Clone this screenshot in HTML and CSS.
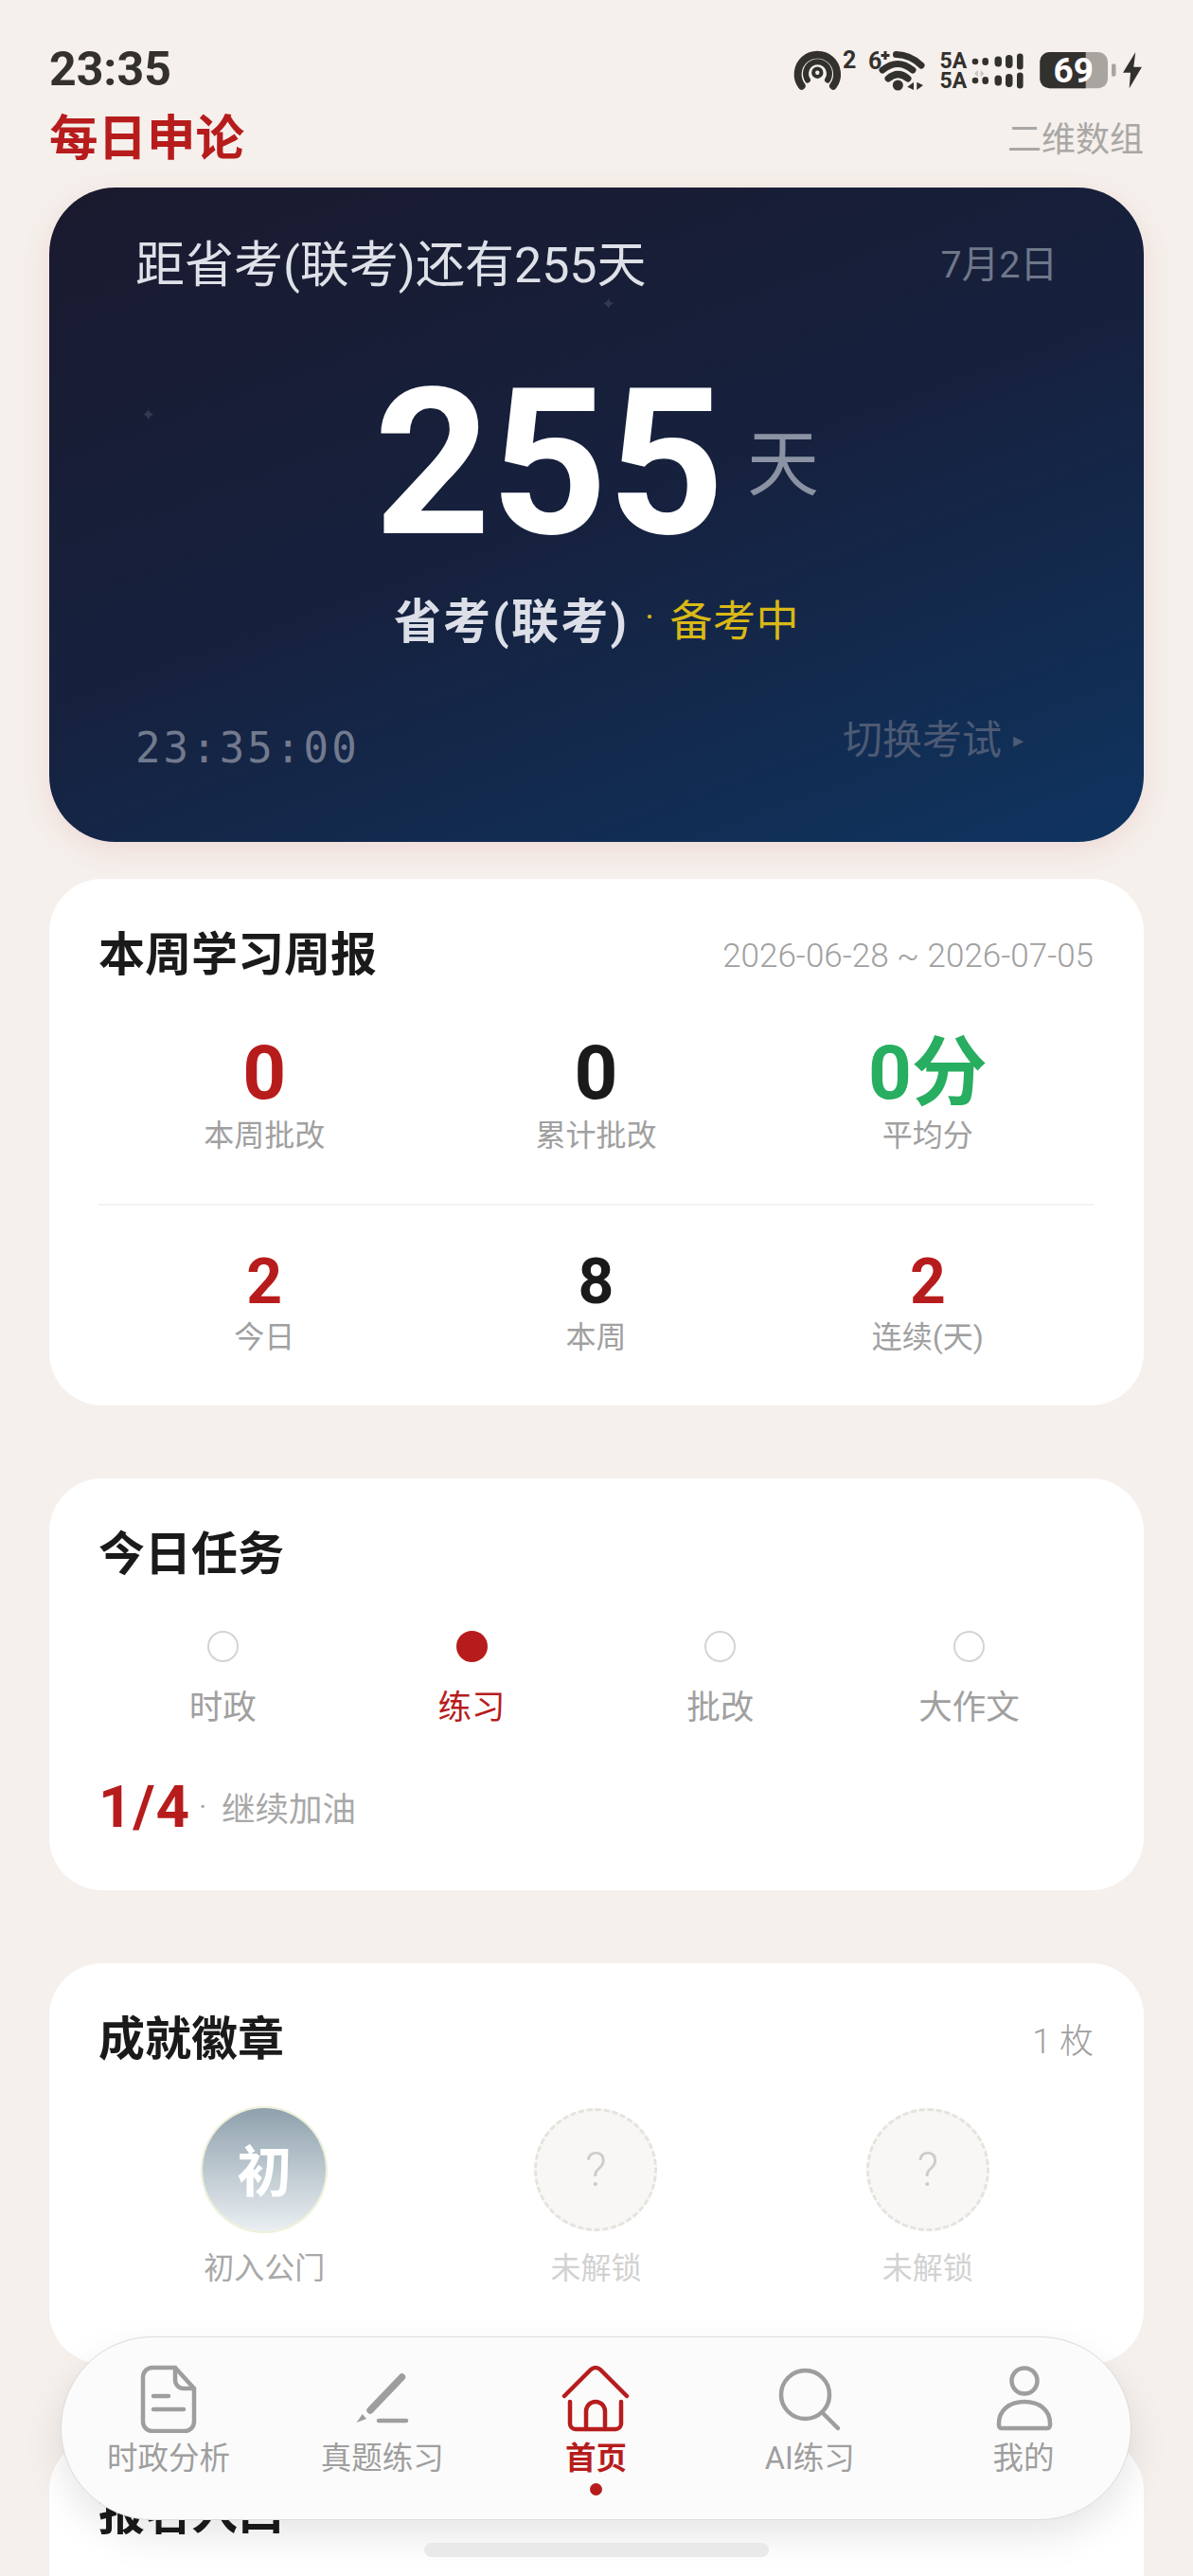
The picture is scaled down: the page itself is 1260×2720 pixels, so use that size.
FILE: index.html
```html
<!DOCTYPE html>
<html lang="zh-CN">
<head>
<meta charset="utf-8">
<title>每日申论</title>
<link rel="stylesheet" href="styles.css">
</head>
<body>
<div class="page">
  <div class="status">
    <span class="time">23:35</span>
    <svg class="status-icons" width="373" height="50" viewBox="0 0 373 50">
      <g class="si-stroke">
        <path class="s7" d="M11.700 40.700A20.700 20.700 0 1 1 45 40.700"/>
        <path class="s5" d="M18 34.500A12.500 12.500 0 1 1 39 34.500"/>
        <circle class="s3" cx="28.300" cy="26.700" r="4.200"/>
        <path class="s6" d="M111.500 7.500Q127 8 138 19"/>
        <path class="s6" d="M97 24Q113 11 129 24"/>
        <path class="s6" d="M103 33Q113.300 24 124 33"/>
      </g>
      <g class="si-fill">
        <text class="st-small" x="55" y="22">2</text>
        <text class="st-small" x="82" y="23">6</text>
        <path d="M98.500 4h3v3h3v3h-3v3h-3v-3h-3V7h3z"/>
        <circle cx="113.300" cy="40" r="5.500"/>
        <path d="M130 36.700V45l-6.700-3.300zM133.300 36.700V45l6.700-5z"/>
        <text class="st-5a" x="157.500" y="21.700">5A</text>
        <text class="st-5a" x="157.500" y="42.700">5A</text>
        <rect x="191.700" y="11.700" width="6.600" height="6.600" rx="3.300"/>
        <rect x="202.400" y="11" width="6.600" height="8" rx="3.300"/>
        <rect x="215.500" y="9.500" width="7.500" height="11" rx="3.700"/>
        <rect x="227" y="8" width="7.500" height="14" rx="3.700"/>
        <rect x="239" y="6.500" width="6.600" height="17" rx="3.300"/>
        <rect x="191.700" y="31.700" width="6.600" height="6.600" rx="3.300"/>
        <rect x="202.400" y="31" width="6.600" height="8" rx="3.300"/>
        <rect x="215.500" y="29.500" width="7.500" height="11" rx="3.700"/>
        <rect x="227" y="28" width="7.500" height="14" rx="3.700"/>
        <rect x="239" y="26.500" width="6.600" height="17" rx="3.300"/>
        <path d="M364.300 5L351 26.700h8L357.700 43.300 371 20.700h-8.700z"/>
      </g>
      <path class="si-faint" d="M198 24v7.500l-4-4zM200.500 24v7.500l4-3.700z"/>
      <rect class="si-batt" x="263.300" y="5" width="71.700" height="38.300" rx="10"/>
      <path class="si-dark" d="M273.300 5H311.700V43.300H273.300A10 10 0 0 1 263.300 33.300V15A10 10 0 0 1 273.300 5z"/>
      <rect class="si-batt" x="339" y="17.300" width="4.500" height="13.400" rx="2"/>
      <text class="st-batt" x="277.500" y="37">69</text>
    </svg>
  </div>

  <header class="topbar">
    <h1 class="brand">每日申论</h1>
    <span class="topbar-note">二维数组</span>
  </header>

  <section class="hero">
    <span class="star star-a">✦</span>
    <span class="star star-b">✦</span>
    <div class="hero-top">
      <span class="hero-title">距省考(联考)还有255天</span>
      <span class="hero-date">7月2日</span>
    </div>
    <div class="hero-count">
      <span class="hero-num">255</span>
      <span class="hero-unit">天</span>
    </div>
    <div class="hero-sub">
      <span class="hero-exam">省考(联考)</span>
      <span class="hero-dot">·</span>
      <span class="hero-state">备考中</span>
    </div>
    <div class="hero-foot">
      <span class="hero-clock">23:35:00</span>
      <span class="hero-switch">切换考试<span class="hero-arrow">▸</span></span>
    </div>
  </section>

  <section class="card card-report">
    <div class="card-head">
      <h2 class="card-title">本周学习周报</h2>
      <span class="card-meta">2026-06-28 ~ 2026-07-05</span>
    </div>
    <div class="stats stats-main">
      <div class="stat"><div class="stat-val red">0</div><div class="stat-label">本周批改</div></div>
      <div class="stat"><div class="stat-val">0</div><div class="stat-label">累计批改</div></div>
      <div class="stat"><div class="stat-val green">0分</div><div class="stat-label">平均分</div></div>
    </div>
    <div class="stats stats-sub">
      <div class="stat"><div class="stat-val red">2</div><div class="stat-label">今日</div></div>
      <div class="stat"><div class="stat-val">8</div><div class="stat-label">本周</div></div>
      <div class="stat"><div class="stat-val red">2</div><div class="stat-label">连续(天)</div></div>
    </div>
  </section>

  <section class="card card-task">
    <div class="card-head">
      <h2 class="card-title">今日任务</h2>
    </div>
    <div class="tasks">
      <div class="task"><span class="task-dot"></span><span class="task-label">时政</span></div>
      <div class="task task-done"><span class="task-dot"></span><span class="task-label">练习</span></div>
      <div class="task"><span class="task-dot"></span><span class="task-label">批改</span></div>
      <div class="task"><span class="task-dot"></span><span class="task-label">大作文</span></div>
    </div>
    <div class="progress">
      <span class="progress-num">1/4</span>
      <span class="progress-sep">·</span>
      <span class="progress-text">继续加油</span>
    </div>
  </section>

  <section class="card card-badges">
    <div class="card-head">
      <h2 class="card-title">成就徽章</h2>
      <span class="card-meta card-count">1 枚</span>
    </div>
    <div class="badges">
      <div class="badge"><div class="badge-disc badge-on">初</div><div class="badge-label">初入公门</div></div>
      <div class="badge badge-locked"><div class="badge-disc badge-off">?</div><div class="badge-label">未解锁</div></div>
      <div class="badge badge-locked"><div class="badge-disc badge-off">?</div><div class="badge-label">未解锁</div></div>
    </div>
  </section>

  <section class="card card-entry">
    <div class="card-head">
      <h2 class="card-title">报名入口</h2>
    </div>
  </section>
</div>

<nav class="tabbar">
  <a class="tab">
    <svg class="tab-icon" viewBox="0 0 72 72"><path d="M19 3H43L63 25V60A10 10 0 0 1 53 70H19A10 10 0 0 1 9 60V13A10 10 0 0 1 19 3Z"/><path d="M43 3V16A9 9 0 0 0 52 25H63"/><path d="M20 33H36M20 47H52"/></svg>
    <span class="tab-label">时政分析</span>
  </a>
  <a class="tab">
    <svg class="tab-icon" viewBox="0 0 72 72"><path class="pen-body" d="M56.500 13L23 48"/><path class="pen-tip" d="M14.700 52L8.600 61 19 57z"/><path d="M32 59H61"/></svg>
    <span class="tab-label">真题练习</span>
  </a>
  <a class="tab tab-active">
    <svg class="tab-icon" viewBox="0 0 72 72"><path d="M3 33L31 5Q36 1 41 5L69 33"/><path d="M9 39V62A6 6 0 0 0 15 68H57A6 6 0 0 0 63 62V39"/><path d="M26 68V49A10 10 0 0 1 46 49V68"/></svg>
    <span class="tab-label">首页</span>
    <span class="tab-dot"></span>
  </a>
  <a class="tab">
    <svg class="tab-icon" viewBox="0 0 72 72"><circle cx="31.500" cy="31.500" r="25.500"/><path d="M50 51L66 67"/></svg>
    <span class="tab-label">AI练习</span>
  </a>
  <a class="tab">
    <svg class="tab-icon" viewBox="0 0 72 72"><circle cx="37" cy="17" r="13.500"/><path d="M13 67A3 3 0 0 1 10 64V62C10 48 21 39 37 39S64 48 64 62V64A3 3 0 0 1 61 67Z"/></svg>
    <span class="tab-label">我的</span>
  </a>
</nav>
<div class="home-bar"></div>
</body>
</html>
```

FILE: styles.css
```css
* { box-sizing: border-box; }
html, body { margin: 0; padding: 0; }
body {
  width: 1260px;
  height: 2720px;
  overflow: hidden;
  position: relative;
  background: #f5f0ec;
  font-family: Roboto, "Noto Sans CJK SC", sans-serif;
  color: #1a1a1a;
}
h1, h2 { margin: 0; }

.page { padding: 50px 52px 0; }

.status {
  display: flex;
  justify-content: space-between;
  align-items: center;
  height: 50px;
}
.time { font-size: 50px; font-weight: 700; line-height: 46px; padding-bottom: 4px; color: #33312e; }
.status-icons { display: block; overflow: visible; }
.si-stroke { fill: none; stroke: #33312e; stroke-linecap: round; }
.s7 { stroke-width: 8; }
.s6 { stroke-width: 7; }
.s5 { stroke-width: 6; }
.s3 { stroke-width: 4; }
.si-fill { fill: #33312e; }
.si-faint { fill: #c9c6c2; }
.si-batt { fill: #a8a4a0; }
.si-dark { fill: #33312e; }
.st-small { font-size: 25px; font-weight: 700; }
.st-5a { font-size: 23px; font-weight: 700; }
.st-batt { font-size: 37px; font-weight: 700; fill: #fff; }

.topbar {
  display: flex;
  justify-content: space-between;
  align-items: center;
  height: 64px;
  margin-top: 12px;
}
.brand { font-size: 51.500px; font-weight: 700; line-height: 64px; padding-top: 5px; color: #b71c1c; }
.topbar-note { font-size: 36px; color: #a9a7a5; }

.hero {
  position: relative;
  height: 691px;
  margin-top: 22px;
  padding: 45px 91px 0 91px;
  border-radius: 70px;
  background: linear-gradient(160deg, #1a1a2e 0%, #16213e 50%, #0f3460 100%);
  box-shadow: 0 8px 32px rgba(183, 28, 28, 0.1);
}
.star { position: absolute; font-size: 18px; line-height: 18px; color: rgba(255, 255, 255, 0.13); }
.star-a { left: 97px; top: 231px; }
.star-b { left: 583px; top: 114px; }
.hero-top {
  display: flex;
  justify-content: space-between;
  align-items: center;
  height: 64px;
}
.hero-title { font-size: 52px; color: #dfe1e8; }
.hero-date { font-size: 39.500px; color: #6f778a; }
.hero-count {
  display: flex;
  justify-content: center;
  align-items: center;
  gap: 24px;
  height: 220px;
  margin-top: 73px;
}
.hero-num { font-size: 215px; font-weight: 700; line-height: 220px; color: #fff; }
.hero-unit { margin-top: 2px; font-size: 76px; line-height: 76px; color: #8a92a3; }
.hero-sub {
  display: flex;
  justify-content: center;
  align-items: center;
  gap: 17px;
  height: 60px;
  margin-top: 22px;
}
.hero-exam { font-size: 50px; font-weight: 700; letter-spacing: 2.200px; color: #dcdfe8; }
.hero-dot { font-size: 36px; color: #d4b514; }
.hero-state { font-size: 45px; letter-spacing: 0.500px; color: #d9b916; }
.hero-foot {
  display: flex;
  justify-content: space-between;
  align-items: flex-start;
  margin-top: 70px;
}
.hero-clock {
  margin-top: 8px;
  font-family: "DejaVu Sans Mono", monospace;
  font-size: 44px;
  line-height: 60px;
  letter-spacing: 3.100px;
  color: #727a8e;
}
.hero-switch {
  display: flex;
  align-items: center;
  gap: 12px;
  margin-right: 36px;
  font-size: 42px;
  line-height: 60px;
  color: #4d5a74;
}
.hero-arrow { font-size: 22px; }

.card {
  padding: 51px 53px 0 52px;
  border-radius: 56px;
  background: #fff;
  margin-top: 77px;
}
.card-report { margin-top: 39px; height: 556px; }
.card-task { height: 435px; }
.card-badges { height: 423px; }
.card-entry { height: 300px; margin-top: 78px; }
.card-head {
  display: flex;
  justify-content: space-between;
  align-items: center;
  height: 60px;
}
.card-title { font-size: 49px; font-weight: 700; line-height: 60px; color: #1a1a1a; }
.card-meta { font-size: 35px; font-weight: 300; color: #a0a0a0; }
.card-count { font-size: 36px; padding-bottom: 4px; }

.stats { display: grid; grid-template-columns: repeat(3, 1fr); text-align: center; }
.stats-main { margin-top: 49px; padding-bottom: 50px; border-bottom: 2px solid #f5f2ef; }
.stats-sub { margin-top: 46px; }
.stat-val { font-weight: 700; }
.stats-main .stat-val { font-size: 80px; line-height: 90px; }
.stats-sub .stat-val { font-size: 66px; line-height: 70px; }
.stat-label { font-size: 32px; line-height: 44px; color: #a0a0a0; }
.stats-main .stat-label { margin-top: -1px; }
.stats-sub .stat-label { margin-top: 1px; }
.red { color: #b71c1c; }
.green { color: #27ae60; }

.tasks { display: grid; grid-template-columns: repeat(4, 1fr); margin-top: 50px; }
.task { display: flex; flex-direction: column; align-items: center; gap: 26px; }
.task-dot {
  width: 33px;
  height: 33px;
  border: 2px solid #d4d4d4;
  border-radius: 50%;
}
.task-label { font-size: 35.500px; line-height: 44px; color: #a0a0a0; }
.task-done .task-dot { background: #b71c1c; border-color: #b71c1c; }
.task-done .task-label { color: #b71c1c; }
.progress { display: flex; align-items: center; height: 70px; margin-top: 47px; }
.progress-num { font-size: 62px; font-weight: 700; letter-spacing: 1px; color: #b71c1c; }
.progress-sep { margin: 0 16px 0 9px; font-size: 30px; color: #a8a8a8; }
.progress-text { font-size: 35.500px; color: #a8a8a8; }

.badges { display: grid; grid-template-columns: repeat(3, 1fr); margin-top: 42px; }
.badge { display: flex; flex-direction: column; align-items: center; gap: 17px; }
.badge-disc {
  display: flex;
  align-items: center;
  justify-content: center;
  width: 130px;
  height: 130px;
  border-radius: 50%;
}
.badge-on {
  padding-bottom: 4px;
  background: linear-gradient(180deg, #8fa1ad 0%, #eaeff2 100%);
  box-shadow: 0 0 0 2px #eef0d8;
  font-size: 58px;
  font-weight: 700;
  color: #fff;
}
.badge-off {
  background: #f8f7f5;
  border: 3px dashed #e6e3de;
  font-size: 50px;
  font-weight: 300;
  color: #cccccc;
}
.badge-label { font-size: 32px; line-height: 44px; color: #a8a8a8; }
.badge-locked .badge-label { color: #d2d2d2; }

.tabbar {
  position: absolute;
  left: 64px;
  top: 2467px;
  width: 1131px;
  height: 194px;
  display: grid;
  grid-template-columns: repeat(5, 1fr);
  padding-top: 29px;
  border: 1px solid #dcdcdc;
  border-radius: 97px;
  background: #fbfbfb;
  box-shadow: 0 16px 40px rgba(0, 0, 0, 0.1);
}
.tab { display: flex; flex-direction: column; align-items: center; position: relative; }
.tab-icon {
  width: 72px;
  height: 72px;
  fill: none;
  stroke: #9e9e9e;
  stroke-width: 4.500;
  stroke-linecap: round;
  stroke-linejoin: round;
}
.pen-body { stroke-width: 7.500; }
.pen-tip { fill: #9e9e9e; stroke-width: 0; }
.tab-label { margin-top: 7px; font-size: 32.500px; line-height: 40px; color: #9e9e9e; }
.tab-active .tab-icon { stroke: #b71c1c; }
.tab-active .tab-label { color: #b71c1c; font-weight: 700; }
.tab-dot {
  margin-top: 6px;
  width: 13px;
  height: 13px;
  border-radius: 50%;
  background: #b71c1c;
}

.home-bar {
  position: absolute;
  left: 448px;
  top: 2685px;
  width: 364px;
  height: 15px;
  border-radius: 8px;
  background: #e9e9e9;
}
```
